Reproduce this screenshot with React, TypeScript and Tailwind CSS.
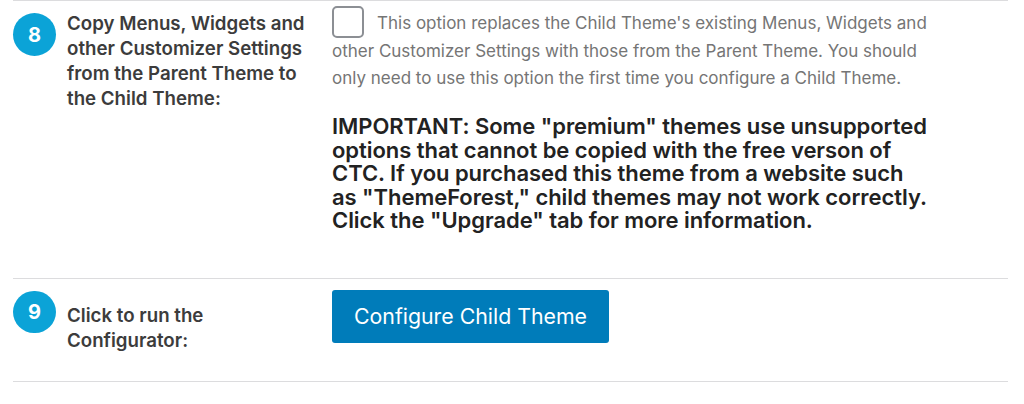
import React from "react";

const font = { fontFamily: "Inter, 'Noto Sans', sans-serif" };

export default function App() {
  return (
    <div className="w-[1024px] h-[404px] bg-white overflow-hidden" style={font}>
      <div className="mx-[13px] w-[995px] border-t border-[#dcdcde]">
        {/* Row 8 */}
        <div className="flex border-b border-[#dcdcde] h-[278px]">
          <div className="flex w-[319px] shrink-0">
            <div className="mt-[12px] w-[43px] h-[43px] rounded-full bg-[#0ba3d7] text-white flex items-center justify-center text-[20px] font-bold shrink-0">
              8
            </div>
            <div className="ml-[11px] mt-[10px] text-[18.7px] leading-[25px] font-semibold text-[#3c3c3c] whitespace-nowrap">
              Copy Menus, Widgets and
              <br />
              other Customizer Settings
              <br />
              from the Parent Theme to
              <br />
              the Child Theme:
            </div>
          </div>
          <div className="w-[660px]">
            <div className="mt-[9px] text-[17px] leading-[27px] text-[#757575] whitespace-nowrap">
              <span className="inline-block align-[-9px] w-[32px] h-[32px] rounded-[5px] border-2 border-[#8c8f94] mr-[13px] mt-[-8px]"></span>
              This option replaces the Child Theme's existing Menus, Widgets and
              <br />
              other Customizer Settings with those from the Parent Theme. You should
              <br />
              only need to use this option the first time you configure a Child Theme.
            </div>
            <div className="mt-[23px] text-[22px] leading-[23.5px] font-semibold text-[#222] tracking-[-0.05px] whitespace-nowrap">
              IMPORTANT: Some "premium" themes use unsupported
              <br />
              options that cannot be copied with the free verson of
              <br />
              CTC. If you purchased this theme from a website such
              <br />
              as "ThemeForest," child themes may not work correctly.
              <br />
              Click the "Upgrade" tab for more information.
            </div>
          </div>
        </div>
        {/* Row 9 */}
        <div className="flex border-b border-[#dcdcde] h-[103px]">
          <div className="flex w-[319px] shrink-0">
            <div className="mt-[12px] w-[43px] h-[42px] rounded-full bg-[#0ba3d7] text-white flex items-center justify-center text-[20px] font-bold shrink-0">
              9
            </div>
            <div className="ml-[11px] mt-[24px] text-[18.7px] leading-[25px] font-semibold text-[#3c3c3c]">
              Click to run the
              <br />
              Configurator:
            </div>
          </div>
          <div>
            <button className="mt-[11px] w-[277px] h-[53px] rounded-[3px] bg-[#007cba] text-white text-[21.3px]">
              Configure Child Theme
            </button>
          </div>
        </div>
      </div>
    </div>
  );
}
